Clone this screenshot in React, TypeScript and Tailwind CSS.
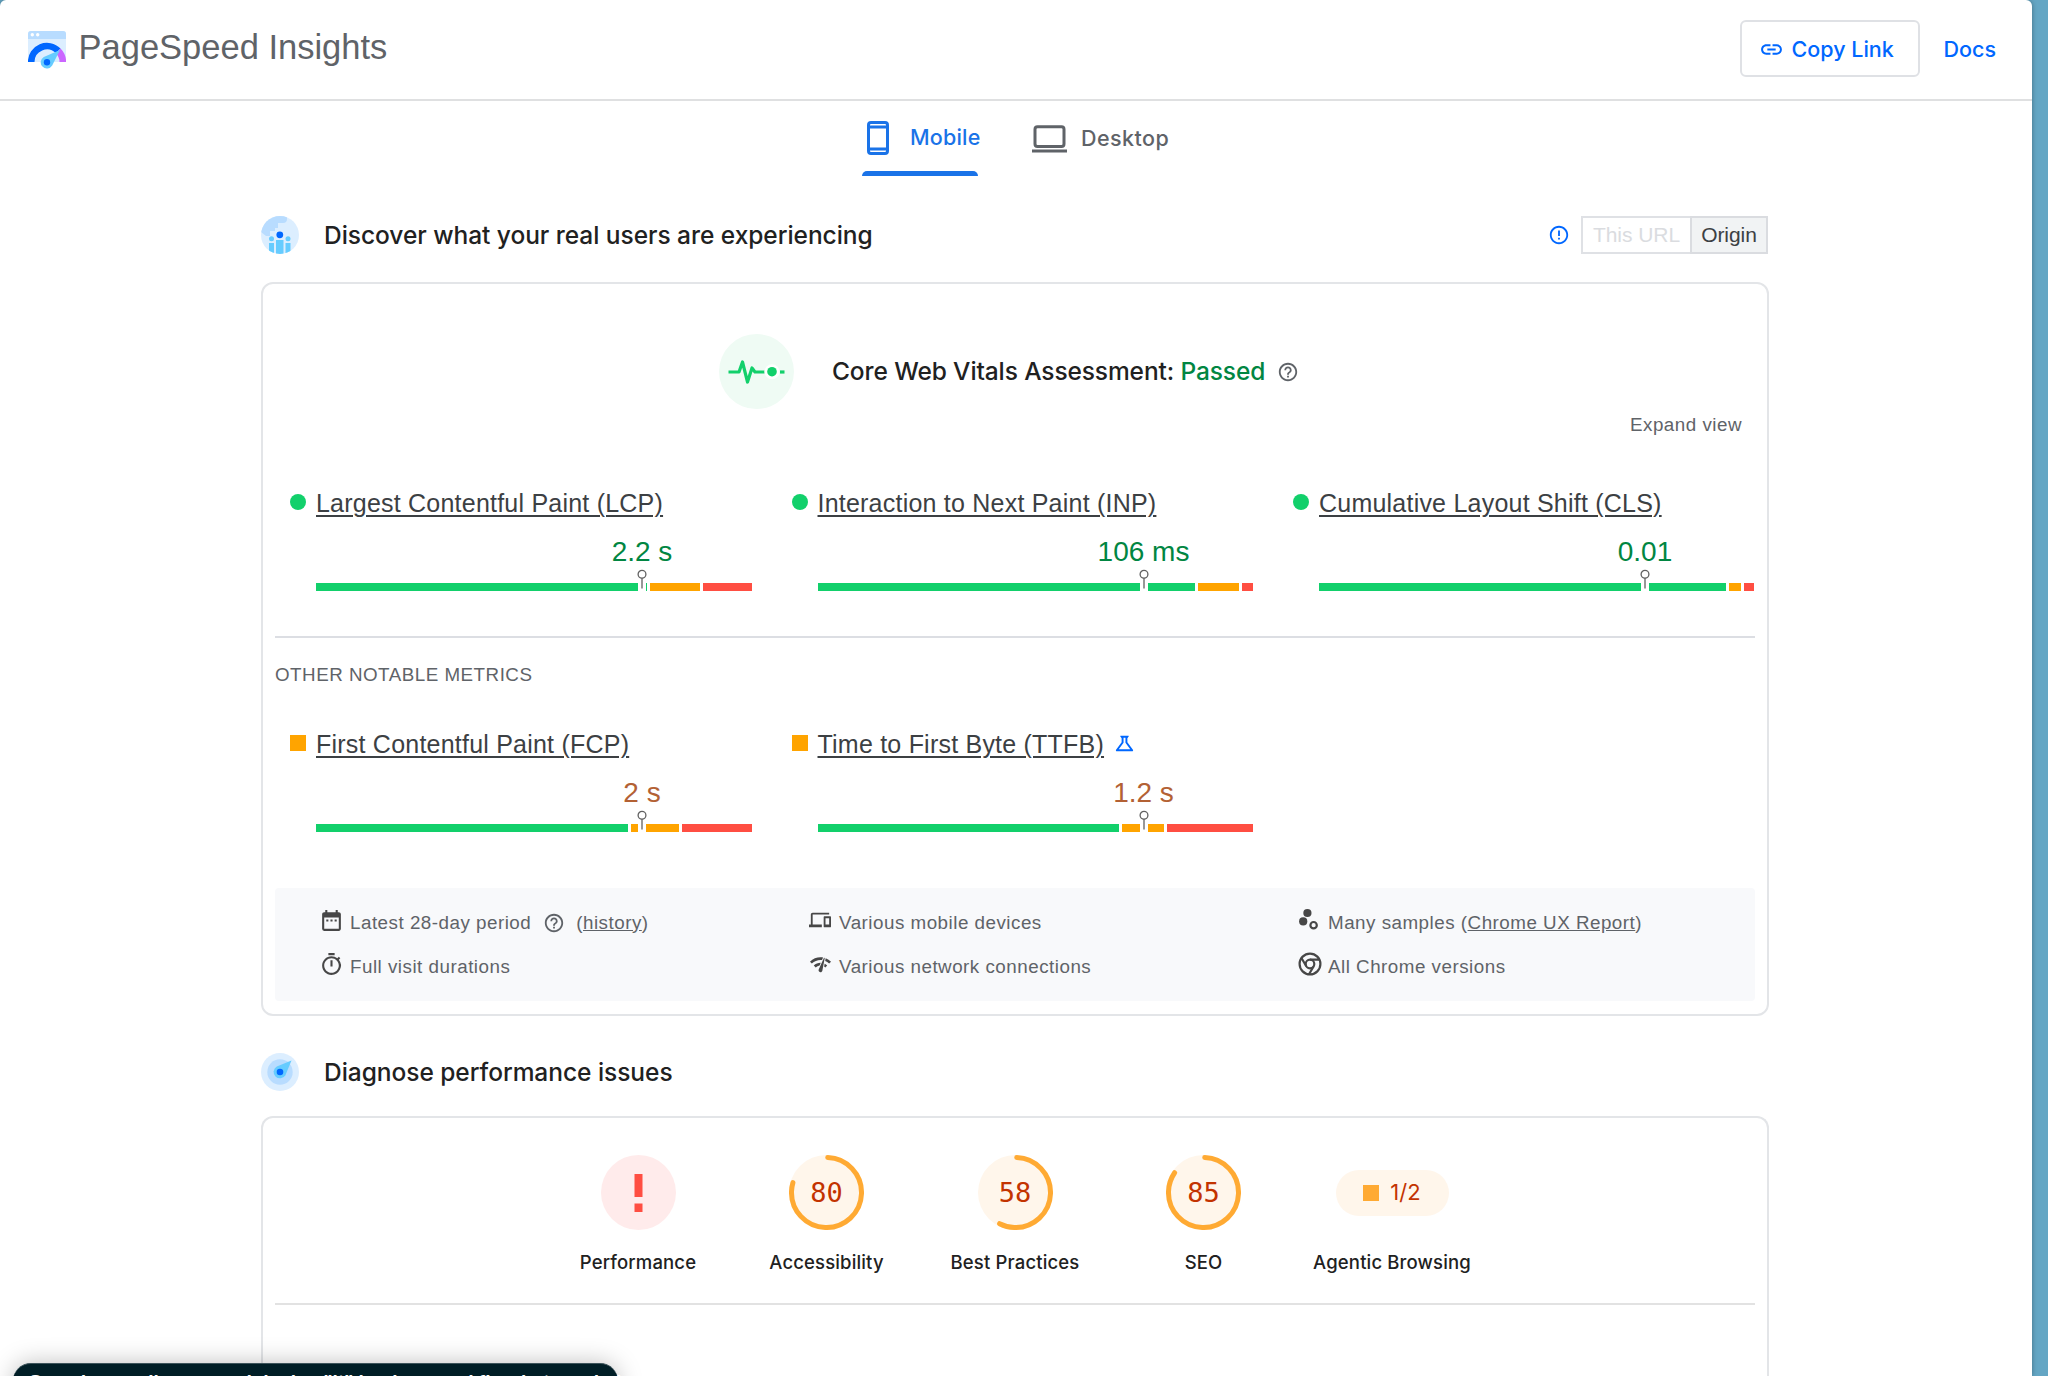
import type { ReactNode } from "react";
import {
  MdDateRange,
  MdDevices,
  MdErrorOutline,
  MdHelpOutline,
  MdLink,
  MdNetworkCheck,
  MdOutlineScience,
  MdOutlineTimer,
} from "react-icons/md";

type Segment = { color: string; width: number };

type MetricProps = {
  name: string;
  value: string;
  status: "good" | "average";
  segments: Segment[];
  experimental?: boolean;
};

const GREEN = "bg-[#12d06b]";
const ORANGE = "bg-[#ffa400]";
const RED = "bg-[#ff4e42]";

const coreMetrics: MetricProps[] = [
  {
    name: "Largest Contentful Paint (LCP)",
    value: "2.2 s",
    status: "good",
    segments: [
      { color: GREEN, width: 331 },
      { color: ORANGE, width: 50 },
      { color: RED, width: 49 },
    ],
  },
  {
    name: "Interaction to Next Paint (INP)",
    value: "106 ms",
    status: "good",
    segments: [
      { color: GREEN, width: 377 },
      { color: ORANGE, width: 41 },
      { color: RED, width: 11 },
    ],
  },
  {
    name: "Cumulative Layout Shift (CLS)",
    value: "0.01",
    status: "good",
    segments: [
      { color: GREEN, width: 407 },
      { color: ORANGE, width: 12 },
      { color: RED, width: 10 },
    ],
  },
];

const otherMetrics: MetricProps[] = [
  {
    name: "First Contentful Paint (FCP)",
    value: "2 s",
    status: "average",
    segments: [
      { color: GREEN, width: 312 },
      { color: ORANGE, width: 48 },
      { color: RED, width: 70 },
    ],
  },
  {
    name: "Time to First Byte (TTFB)",
    value: "1.2 s",
    status: "average",
    experimental: true,
    segments: [
      { color: GREEN, width: 301 },
      { color: ORANGE, width: 42 },
      { color: RED, width: 86 },
    ],
  },
];

function Logo() {
  return (
    <svg width="38" height="38" viewBox="0 0 38 38">
      <path d="M3 0h32a3 3 0 0 1 3 3v28H0V3a3 3 0 0 1 3-3z" fill="#dceeff" />
      <path d="M3 0h32a3 3 0 0 1 3 3v5H0V3a3 3 0 0 1 3-3z" fill="#b8dcff" />
      <circle cx="4.3" cy="3.7" r="1.7" fill="#fff" />
      <circle cx="9.7" cy="3.7" r="1.7" fill="#fff" />
      <path d="M3.2 31a15.8 15.8 0 0 1 27-11.2" fill="none" stroke="#0067ff" strokeWidth="6.6" />
      <path d="M30.2 19.8A15.8 15.8 0 0 1 34.8 31" fill="none" stroke="#cb66ff" strokeWidth="6.6" />
      <path d="M32 19 24.2 34.5a6.2 6.2 0 1 1-8.4-8.6z" fill="#66ccff" />
      <circle cx="19" cy="31.2" r="3.2" fill="#0067ff" />
    </svg>
  );
}

function UsersIcon() {
  return (
    <svg width="38" height="38" viewBox="0 0 38 38">
      <defs>
        <clipPath id="users">
          <circle cx="19" cy="19" r="19" />
        </clipPath>
      </defs>
      <g clipPath="url(#users)">
        <rect width="38" height="38" fill="#dceeff" />
        <path d="M0 0h26v3a4 4 0 0 1-4 4h-5v5h-3v3H9v5H5L0 16z" fill="#b8dcff" />
        <rect x="15" y="24" width="7.5" height="14" fill="#66ccff" />
        <rect x="8" y="27" width="5" height="11" fill="#66ccff" />
        <rect x="24.5" y="27" width="5" height="11" fill="#66ccff" />
        <circle cx="10.5" cy="22.7" r="2.5" fill="#66ccff" />
        <circle cx="27" cy="22.7" r="2.5" fill="#66ccff" />
        <circle cx="18.8" cy="18.8" r="3.4" fill="#0067ff" />
      </g>
    </svg>
  );
}

function CompassIcon() {
  return (
    <svg width="38" height="38" viewBox="0 0 38 38">
      <circle cx="19" cy="19" r="19" fill="#dceeff" />
      <circle cx="19" cy="19" r="12.7" fill="#b8dcff" />
      <path d="M30.5 7.5 24.4 22.2a6.3 6.3 0 1 1-8.6-8.6z" fill="#66ccff" />
      <circle cx="19" cy="19" r="3.3" fill="#0067ff" />
    </svg>
  );
}

function PulseIcon() {
  return (
    <svg width="75" height="75" viewBox="0 0 75 75">
      <circle cx="37.5" cy="37.5" r="37.5" fill="#effbf4" />
      <path
        d="M9.5 38H20l3.5-10 5 20 4.5-14 3 4h9.5"
        fill="none"
        stroke="#12d06b"
        strokeWidth="3.2"
        strokeLinejoin="round"
      />
      <circle cx="53" cy="37.7" r="7.5" fill="#fff" />
      <circle cx="53" cy="37.7" r="4.8" fill="#12d06b" />
      <path d="M61 38h4.5" stroke="#12d06b" strokeWidth="3.2" />
    </svg>
  );
}

function ChromeIcon() {
  return (
    <svg width="24" height="24" viewBox="0 0 24 24" fill="none" stroke="#474747" strokeWidth="2.2">
      <circle cx="12" cy="12" r="10.4" />
      <circle cx="12" cy="12" r="4.3" />
      <path d="M12 7.7h9.4M8.3 14.2 3.6 6.2M15.7 14.2 11 22.3" />
    </svg>
  );
}

function SamplesIcon() {
  return (
    <svg width="24" height="24" viewBox="0 0 24 24" fill="#474747">
      <circle cx="9.4" cy="5" r="4.1" />
      <circle cx="5.2" cy="13.4" r="4.1" />
      <circle cx="15.6" cy="17.2" r="3.2" fill="none" stroke="#474747" strokeWidth="2.2" />
    </svg>
  );
}

function Pin() {
  return (
    <span className="absolute -top-[14px] left-[322px] flex w-2 flex-col items-center">
      <svg width="10" height="22" viewBox="0 0 10 22" className="-mx-px shrink-0">
        <path d="M1 14h8v8H1z" fill="#fff" />
        <circle cx="5" cy="5.2" r="3.9" fill="#fff" stroke="#616161" strokeWidth="1.3" />
        <path d="M5 9v10.5" stroke="#616161" strokeWidth="1.3" />
      </svg>
    </span>
  );
}

function Metric({ name, value, status, segments, experimental }: MetricProps) {
  return (
    <div className="w-[501.5px] shrink-0 pl-[15px]">
      <div className="flex h-[30px] items-center pt-[2px]">
        <span
          className={
            status === "good"
              ? "mr-[10px] mb-[5px] size-4 rounded-full bg-[#12d06b]"
              : "mr-[10px] mb-[5px] size-4 bg-[#ffa400]"
          }
        />
        <a className="text-[25px] tracking-[0.22px] text-[#3c4043] underline decoration-2 underline-offset-[3px]">
          {name}
        </a>
        {experimental && <MdOutlineScience className="mb-[3px] ml-[9px] size-[23px] text-[#0067ff]" />}
      </div>
      <div className="ml-[26px] w-[436px]">
        <div
          className={
            status === "good"
              ? "mt-[17px] ml-[226px] w-[200px] text-center text-[28px] leading-[34px] text-[#018642]"
              : "mt-[17px] ml-[226px] w-[200px] text-center text-[28px] leading-[34px] text-[#b36134]"
          }
        >
          {value}
        </div>
        <div className="relative mt-[14px] flex h-2 gap-[3px]">
          {segments.map((s) => (
            <span key={s.color} className={s.color} style={{ width: s.width }} />
          ))}
          <Pin />
        </div>
      </div>
    </div>
  );
}

function Gauge({ score, label }: { score: number; label: string }) {
  const circumference = 2 * Math.PI * 56;
  const arc = (score / 100) * circumference - 4;
  return (
    <Category label={label}>
      <div className="grid size-[75px] place-items-center">
        <svg width="75" height="75" viewBox="0 0 120 120" className="col-start-1 row-start-1">
          <circle cx="60" cy="60" r="60" fill="#fff6eb" />
          <circle
            cx="60"
            cy="60"
            r="56"
            fill="none"
            stroke="#ffaa33"
            strokeWidth="8"
            strokeLinecap="round"
            strokeDasharray={`${arc} ${circumference}`}
            transform="rotate(-88 60 60)"
          />
        </svg>
        <span className="col-start-1 row-start-1 font-['DejaVu_Sans_Mono',monospace] text-[27px] leading-none text-[#c33300]">
          {score}
        </span>
      </div>
    </Category>
  );
}

function Category({ label, children }: { label: string; children: ReactNode }) {
  return (
    <div className="flex w-[188.5px] flex-col items-center">
      {children}
      <span className="mt-[20px] font-['Inter',sans-serif] text-[18.5px] leading-6 font-medium tracking-[0.15px] text-[#212121]">
        {label}
      </span>
    </div>
  );
}

function Fact({ icon, children }: { icon: ReactNode; children: ReactNode }) {
  return (
    <div className="flex h-11 items-center">
      <span className="mb-[6px] flex w-[30px] text-[#474747]">{icon}</span>
      <span className="flex items-center">{children}</span>
    </div>
  );
}

export default function App() {
  return (
    <div className="h-[1376px] w-[2048px] overflow-hidden bg-[#64a6c4] font-['Liberation_Sans',Arial,sans-serif]">
      <div className="relative h-full w-[2032px] rounded-t-[6px] bg-white shadow-[0_0_5px_rgba(0,0,0,0.35)]">
        <header className="flex h-[101px] items-center border-b-2 border-[#dfe0e1] pl-7">
          <Logo />
          <h1 className="mb-[4px] ml-[12.5px] text-[34.5px] text-[#5f6368]">PageSpeed Insights</h1>
          <div className="mb-[2px] ml-auto flex items-center pr-[36px] font-['Inter',sans-serif] text-[21.5px] font-medium text-[#0067ff]">
            <button className="flex h-[57px] w-[180px] items-center rounded-[6px] border-2 border-[#dfe1e5] pt-px pl-[17px]">
              <MdLink className="mr-[8px] size-[25px]" />
              Copy Link
            </button>
            <a className="ml-6 pt-px">Docs</a>
          </div>
        </header>

        <nav className="ml-[862px] flex font-['Inter',sans-serif] text-[21.5px] font-medium">
          <div className="flex h-[75px] w-[117px] flex-col text-[#1a73e8]">
            <div className="flex h-[70px] items-center pt-[3px] pl-[5px] whitespace-nowrap">
              <svg
                className="shrink-0"
                width="22"
                height="34"
                viewBox="0 0 22 34"
                fill="none"
                stroke="#1a73e8"
                strokeWidth="3"
              >
                <rect x="1.5" y="1.5" width="19" height="31" rx="2.5" />
                <path d="M1.5 6h19M1.5 28h19" />
              </svg>
              <span className="ml-[21px] tracking-[0.2px]">Mobile</span>
            </div>
            <span className="mr-px h-[5px] rounded-t-[5px] bg-[#1a73e8]" />
          </div>
          <div className="ml-[53px] flex h-[72px] items-center pt-[4px] text-[#5f6368]">
            <svg width="35" height="28" viewBox="0 0 35 28" fill="none" stroke="#5f6368" strokeWidth="3">
              <rect x="3" y="1.7" width="29" height="19.8" rx="2.5" />
              <path d="M0 26h35" />
            </svg>
            <span className="mb-[2px] ml-[14px] tracking-[0.45px]">Desktop</span>
          </div>
        </nav>

        <main className="ml-[261px] w-[1507px]">
          <div className="mt-10 flex h-[38px] items-center">
            <UsersIcon />
            <h2 className="ml-[25px] font-['Inter',sans-serif] text-[24.5px] font-medium tracking-[-0.04px] text-[#212121]">
              Discover what your real users are experiencing
            </h2>
            <MdErrorOutline className="ml-auto size-[22px] text-[#0067ff]" />
            <div className="ml-[11px] flex text-[21px] tracking-[-0.05px]">
              <button className="h-[38px] w-[109px] border-2 border-r-0 border-[#dfe1e5] text-[#dadce0]">
                This URL
              </button>
              <button className="h-[38px] w-[78px] border-2 border-[#dadce0] bg-[#f1f3f4] text-[#3c4043]">
                Origin
              </button>
            </div>
          </div>

          <section className="mt-7 h-[734px] w-[1508px] rounded-[12px] border-2 border-[#e3e5e8] px-3 pt-[50px]">
            <div className="ml-[444px] flex h-[75px] items-center">
              <PulseIcon />
              <h3 className="ml-[38px] font-['Inter',sans-serif] text-[24.5px] font-medium tracking-[-0.11px] text-[#212121]">
                Core Web Vitals Assessment: <span className="text-[#018642]">Passed</span>
              </h3>
              <MdHelpOutline className="ml-[12px] size-[22px] text-[#5f6368]" />
            </div>
            <div className="mt-[4px] pr-[13px] text-right text-[18.8px] leading-6 tracking-[0.5px] text-[#5f6368]">
              Expand view
            </div>
            <div className="mt-[51px] flex">
              {coreMetrics.map((m) => (
                <Metric key={m.name} {...m} />
              ))}
            </div>
            <div className="mt-[45px] h-[2px] bg-[#dcdee3]" />
            <div className="mt-[25px] text-[18.8px] leading-6 tracking-[0.5px] text-[#5f6368]">
              OTHER NOTABLE METRICS
            </div>
            <div className="mt-[42px] flex">
              {otherMetrics.map((m) => (
                <Metric key={m.name} {...m} />
              ))}
            </div>
            <div className="mt-[56px] grid h-[113px] grid-cols-[489px_489px_1fr] content-start rounded-[4px] bg-[#f8f9fb] pt-[13px] pl-[45px] text-[18.8px] tracking-[0.5px] whitespace-pre text-[#5f6368]">
              <Fact icon={<MdDateRange className="-ml-[1px] size-[25px]" />}>
                Latest 28-day period
                <MdHelpOutline className="mr-[11px] ml-[12px] size-[22px]" />(<a className="underline">history</a>)
              </Fact>
              <Fact icon={<MdDevices className="size-[22px]" />}>Various mobile devices</Fact>
              <Fact icon={<SamplesIcon />}>
                {"Many samples ("}
                <a className="underline">Chrome UX Report</a>)
              </Fact>
              <Fact icon={<MdOutlineTimer className="-ml-[1px] size-[25px]" />}>Full visit durations</Fact>
              <Fact icon={<MdNetworkCheck className="size-[23px]" />}>Various network connections</Fact>
              <Fact icon={<ChromeIcon />}>All Chrome versions</Fact>
            </div>
          </section>

          <div className="mt-[37px] flex h-[38px] items-center">
            <CompassIcon />
            <h2 className="ml-[25px] font-['Inter',sans-serif] text-[24.5px] font-medium tracking-[-0.04px] text-[#212121]">
              Diagnose performance issues
            </h2>
          </div>

          <section className="mt-[25px] h-[300px] w-[1508px] rounded-t-[12px] border-2 border-b-0 border-[#e3e5e8] px-3 pt-[37px]">
            <div className="flex h-[148px] justify-center">
              <Category label="Performance">
                <svg width="75" height="75" viewBox="0 0 75 75">
                  <circle cx="37.5" cy="37.5" r="37.5" fill="#ffebeb" />
                  <path d="M33.5 19h8v23h-8zM33.5 48.5h8V57h-8z" fill="#ff4e42" />
                </svg>
              </Category>
              <Gauge score={80} label="Accessibility" />
              <Gauge score={58} label="Best Practices" />
              <Gauge score={85} label="SEO" />
              <Category label="Agentic Browsing">
                <div className="flex h-[75px] items-center">
                  <div className="flex h-[46px] w-[113px] items-center justify-center gap-[11px] rounded-full bg-[#fff6eb] font-['Inter',sans-serif] text-[22px] text-[#c33300]">
                    <span className="size-4 bg-[#ffaa33]" />
                    1/2
                  </div>
                </div>
              </Category>
            </div>
            <div className="h-[2px] bg-[#e2e2e2]" />
          </section>
        </main>

        {/* link preview bar along the bottom edge */}
        <div className="absolute top-[1363px] left-[13px] h-[40px] w-[605px] rounded-t-[18px] border-t border-[#3d545b] bg-[#001e26] pt-[5px] pl-[16px] text-[19px] leading-[26px] font-bold whitespace-nowrap text-white shadow-[0_0_24px_rgba(0,0,0,0.25)]">
          Speed up, pull, scan and deploy "it" in place, and fix what needed
        </div>
      </div>
    </div>
  );
}
